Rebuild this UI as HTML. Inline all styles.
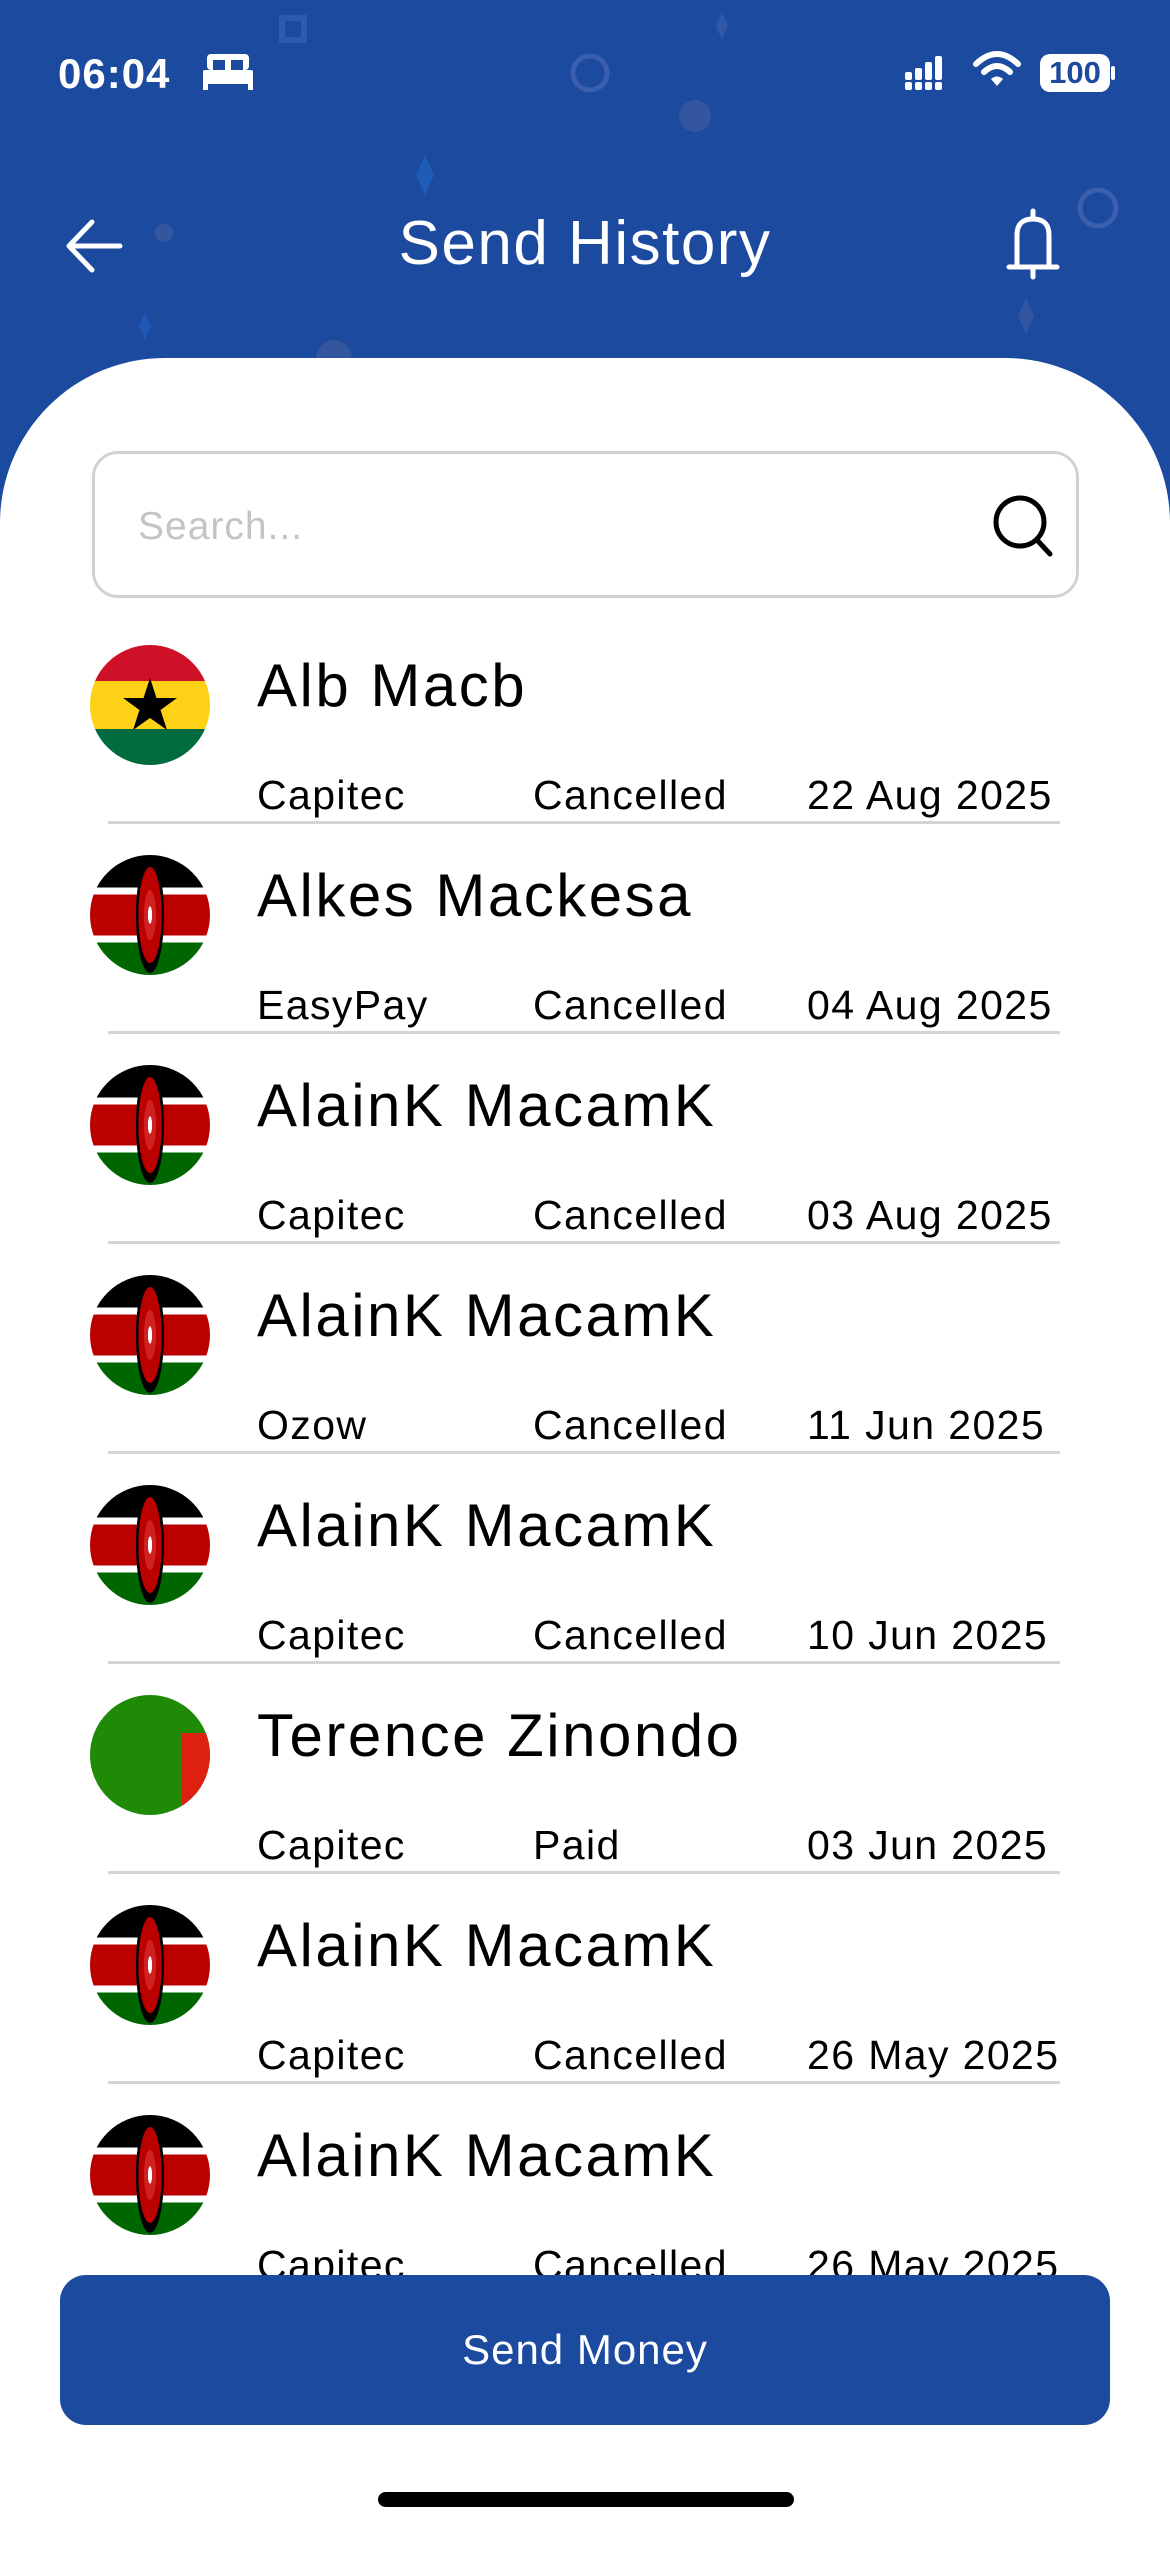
<!DOCTYPE html>
<html><head><meta charset="utf-8"><style>
*{margin:0;padding:0;box-sizing:border-box}
body{width:1170px;height:2532px;overflow:hidden;background:#fff;font-family:"Liberation Sans",sans-serif;position:relative}
.hdr{position:absolute;left:0;top:0;width:1170px;height:520px;background:#1b4a9e}
.card{position:absolute;left:0;top:358px;width:1170px;height:2200px;background:#fff;border-radius:165px 165px 0 0}
.abs{position:absolute}
.row{position:absolute;left:0;width:1170px;height:210px}
.flag{position:absolute;left:90px;top:0;width:120px;height:120px;border-radius:50%;overflow:hidden}
.name{position:absolute;left:257px;top:10px;font-size:60px;line-height:62px;color:#000;letter-spacing:2.5px}
.d{position:absolute;top:128px;font-size:41px;line-height:44px;color:#000;letter-spacing:1.4px}
.div{position:absolute;left:108px;width:952px;top:176px;height:3px;background:#d4d4d4;border-radius:2px}
.kenya{background:linear-gradient(#000 0 27%,#fff 27% 33%,#bb0000 33% 67%,#fff 67% 73%,#006600 73%)}
.kenya::after{content:"";position:absolute;left:46px;top:2px;width:28px;height:116px;border-radius:50%;background:radial-gradient(ellipse at center,#fff 0 10%,#d02020 11% 30%,#bb0000 31% 58%,#000 59%);}
</style></head><body>
<div class="hdr">
<svg width="1170" height="520" style="position:absolute;left:0;top:0">
<circle cx="590" cy="73" r="17" fill="none" stroke="#3a5fae" stroke-width="5"/>
<circle cx="695" cy="116" r="16" fill="#33569f"/>
<circle cx="1098" cy="208" r="18" fill="none" stroke="#3a5fae" stroke-width="5"/>
<circle cx="164" cy="233" r="9" fill="#33569f"/>
<circle cx="334" cy="358" r="18" fill="#33569f"/>
<rect x="282" y="18" width="22" height="22" fill="none" stroke="#2d59b0" stroke-width="6"/>
<path d="M425 155 l9 20 l-9 20 l-9 -20z" fill="#1f5bb8"/>
<path d="M722 12 l6 14 l-6 14 l-6 -14z" fill="#2f58a8"/>
<path d="M1026 298 l8 18 l-8 18 l-8 -18z" fill="#33569f"/>
<path d="M145 312 l6 14 l-6 14 l-6 -14z" fill="#2158b5"/>
</svg>
</div>
<div class="abs" style="left:58px;top:50px;color:#fff;font-size:42px;font-weight:bold;letter-spacing:1px">06:04</div>
<svg class="abs" style="left:203px;top:52px" width="50" height="38" viewBox="0 0 50 38"><rect x="4" y="2" width="42" height="16" rx="4" fill="#fff"/><rect x="10" y="8" width="12" height="10" fill="#1b4a9e"/><rect x="28" y="8" width="12" height="10" fill="#1b4a9e"/><rect x="0" y="18" width="50" height="14" rx="2" fill="#fff"/><rect x="0" y="30" width="5" height="8" fill="#fff"/><rect x="45" y="30" width="5" height="8" fill="#fff"/></svg>
<svg class="abs" style="left:905px;top:52px" width="60" height="40"><g fill="#fff"><rect x="0" y="20" width="7" height="8" rx="2"/><rect x="10" y="16" width="7" height="12" rx="2"/><rect x="20" y="10" width="7" height="18" rx="2"/><rect x="30" y="4" width="7" height="24" rx="2"/><rect x="0" y="30" width="7" height="8" rx="2"/><rect x="10" y="30" width="7" height="8" rx="2"/><rect x="20" y="30" width="7" height="8" rx="2"/><rect x="30" y="30" width="7" height="8" rx="2"/></g></svg>
<svg class="abs" style="left:972px;top:48px" width="50" height="42" viewBox="0 0 50 42"><path d="M4 16 Q25 -4 46 16" stroke="#fff" stroke-width="6" fill="none" stroke-linecap="round"/><path d="M12 24 Q25 12 38 24" stroke="#fff" stroke-width="6" fill="none" stroke-linecap="round"/><path d="M19 31 L25 38 L31 31 Q25 26 19 31z" fill="#fff"/></svg>
<div class="abs" style="left:1040px;top:54px;width:70px;height:38px;background:#fff;border-radius:10px;color:#1b4a9e;font-weight:bold;font-size:31px;line-height:38px;text-align:center">100</div>
<div class="abs" style="left:1111px;top:66px;width:4px;height:14px;background:#fff;border-radius:2px"></div>
<svg class="abs" style="left:64px;top:218px" width="62" height="56" viewBox="0 0 62 56"><path d="M56 28 H6 M28 4 L5 28 L28 52" stroke="#fff" stroke-width="5" fill="none" stroke-linecap="round" stroke-linejoin="round"/></svg>
<div class="abs" style="left:0;width:1170px;top:208px;text-align:center;color:#fff;font-size:62px;letter-spacing:1.5px">Send History</div>
<svg class="abs" style="left:1003px;top:205px" width="60" height="80" viewBox="0 0 60 80"><path d="M30 6 V12 M14 62 V30 Q14 14 30 14 Q46 14 46 30 V62 M6 62 H54 M30 64 V72" stroke="#fff" stroke-width="5" fill="none" stroke-linecap="round" stroke-linejoin="round"/></svg>
<div class="card"></div>
<div class="abs" style="left:92px;top:451px;width:987px;height:147px;border:3px solid #d2d2d2;border-radius:26px"></div>
<div class="abs" style="left:138px;top:505px;font-size:39px;color:#c4c4c4;letter-spacing:1px">Search...</div>
<svg class="abs" style="left:988px;top:490px" width="72" height="72" viewBox="0 0 72 72"><circle cx="32" cy="32" r="24" stroke="#000" stroke-width="5" fill="none"/><path d="M49 50 L62 64" stroke="#000" stroke-width="5" stroke-linecap="round"/></svg>

<div class="abs" style="left:0;top:600px;width:1170px;height:1675px;overflow:hidden">
<div style="position:absolute;left:0;top:-600px;width:1170px">

<div class="row" style="top:645px"><div class="flag" style="background:linear-gradient(#ce1126 0 30%,#fcd116 30% 70%,#006b3f 70%)"><svg width="120" height="120" style="position:absolute;left:0;top:0"><path d="M60 33 L66.5 53 L87 53 L70.5 65 L77 85 L60 73 L43 85 L49.5 65 L33 53 L53.5 53z" fill="#000"/></svg></div><div class="name">Alb Macb</div><div class="d" style="left:257px">Capitec</div><div class="d" style="left:533px">Cancelled</div><div class="d" style="left:807px">22 Aug 2025</div><div class="div"></div></div>

<div class="row" style="top:855px"><div class="flag kenya"></div><div class="name">Alkes Mackesa</div><div class="d" style="left:257px">EasyPay</div><div class="d" style="left:533px">Cancelled</div><div class="d" style="left:807px">04 Aug 2025</div><div class="div"></div></div>

<div class="row" style="top:1065px"><div class="flag kenya"></div><div class="name">AlainK MacamK</div><div class="d" style="left:257px">Capitec</div><div class="d" style="left:533px">Cancelled</div><div class="d" style="left:807px">03 Aug 2025</div><div class="div"></div></div>

<div class="row" style="top:1275px"><div class="flag kenya"></div><div class="name">AlainK MacamK</div><div class="d" style="left:257px">Ozow</div><div class="d" style="left:533px">Cancelled</div><div class="d" style="left:807px">11 Jun 2025</div><div class="div"></div></div>

<div class="row" style="top:1485px"><div class="flag kenya"></div><div class="name">AlainK MacamK</div><div class="d" style="left:257px">Capitec</div><div class="d" style="left:533px">Cancelled</div><div class="d" style="left:807px">10 Jun 2025</div><div class="div"></div></div>

<div class="row" style="top:1695px"><div class="flag" style="background:#1e8a06"><div style="position:absolute;left:92px;top:38px;width:28px;height:82px;background:#de2010"></div></div><div class="name">Terence Zinondo</div><div class="d" style="left:257px">Capitec</div><div class="d" style="left:533px">Paid</div><div class="d" style="left:807px">03 Jun 2025</div><div class="div"></div></div>

<div class="row" style="top:1905px"><div class="flag kenya"></div><div class="name">AlainK MacamK</div><div class="d" style="left:257px">Capitec</div><div class="d" style="left:533px">Cancelled</div><div class="d" style="left:807px">26 May 2025</div><div class="div"></div></div>

<div class="row" style="top:2115px"><div class="flag kenya"></div><div class="name">AlainK MacamK</div><div class="d" style="left:257px">Capitec</div><div class="d" style="left:533px">Cancelled</div><div class="d" style="left:807px">26 May 2025</div><div class="div"></div></div>

</div></div>

<div class="abs" style="left:60px;top:2275px;width:1050px;height:150px;background:#1b4a9e;border-radius:26px;color:#fff;font-size:42px;line-height:150px;text-align:center;letter-spacing:1px">Send Money</div>
<div class="abs" style="left:378px;top:2492px;width:416px;height:15px;background:#000;border-radius:8px"></div>
</body></html>
